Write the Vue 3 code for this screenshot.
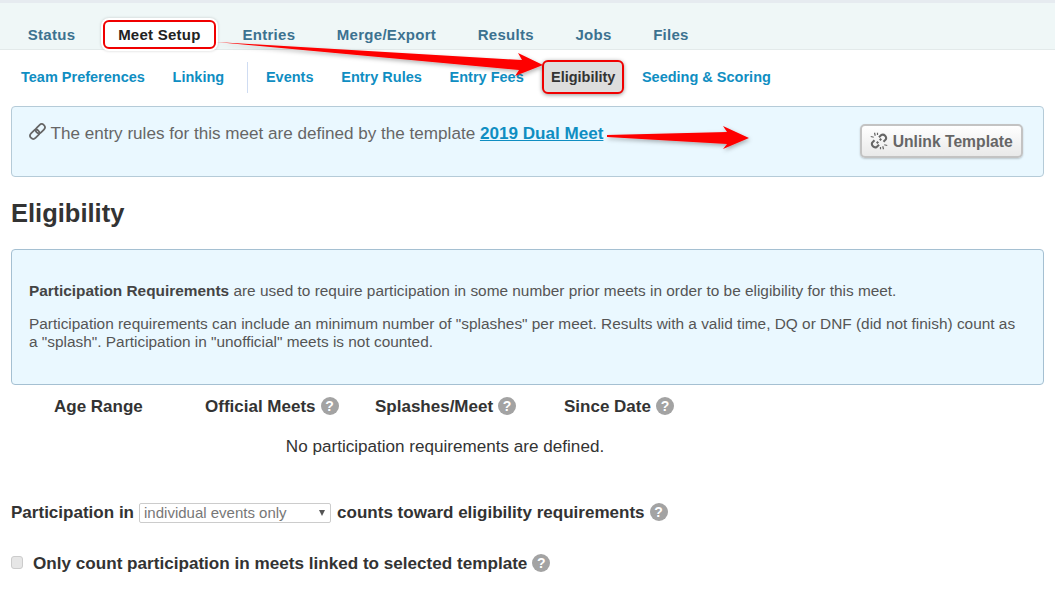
<script setup>
const tabs = [
  { label: 'Status' },
  { label: 'Meet Setup', active: true },
  { label: 'Entries' },
  { label: 'Merge/Export' },
  { label: 'Results' },
  { label: 'Jobs' },
  { label: 'Files' },
]
const subLeft = ['Team Preferences', 'Linking']
const subRight = ['Events', 'Entry Rules', 'Entry Fees', 'Eligibility', 'Seeding & Scoring']
const columns = [
  { label: 'Age Range', help: false, cls: 'c1' },
  { label: 'Official Meets', help: true, cls: 'c2' },
  { label: 'Splashes/Meet', help: true, cls: 'c3' },
  { label: 'Since Date', help: true, cls: 'c4' },
]
</script>

<template>
  <div class="page">
    <nav class="tabs">
      <a v-for="t in tabs" :key="t.label" class="tab" :class="{ active: t.active }">{{ t.label }}</a>
    </nav>

    <nav class="subnav">
      <a v-for="s in subLeft" :key="s" class="sub">{{ s }}</a>
      <span class="divider"></span>
      <a v-for="s in subRight" :key="s" class="sub" :class="{ current: s === 'Eligibility' }">{{ s }}</a>
    </nav>

    <section class="banner">
      <p class="banner-text">
        <svg class="link-icon" viewBox="0 0 24 24" fill="none" stroke="#666" stroke-width="2.2">
          <g transform="rotate(-45 12 12)">
            <rect x="0.500" y="8" width="13" height="8" rx="4" />
            <rect x="10.500" y="8" width="13" height="8" rx="4" />
          </g>
        </svg>
        The entry rules for this meet are defined by the template
        <a class="tpl">2019 Dual Meet</a>
      </p>
      <button class="unlink" type="button">
        <svg class="link-icon small" viewBox="0 0 24 24" fill="none" stroke="#666" stroke-width="2.8">
          <path d="M12 7l3-3a4.500 4.500 0 0 1 6 6l-3 3" />
          <path d="M12 17l-3 3a4.500 4.500 0 0 1-6-6l3-3" />
          <path d="M9 15l2-2M13 11l2-2" />
          <path d="M6 1l1 4M10 1v3M1 6l4 1M18 23l-1-4M14 23v-3M23 18l-4-1" stroke-width="1.600" />
        </svg>
        Unlink Template
      </button>
    </section>

    <h1 class="title">Eligibility</h1>

    <section class="info">
      <p><b>Participation Requirements</b> are used to require participation in some number prior meets in order to be eligibility for this meet.</p>
      <p>Participation requirements can include an minimum number of "splashes" per meet. Results with a valid time, DQ or DNF (did not finish) count as a "splash". Participation in "unofficial" meets is not counted.</p>
    </section>

    <div class="cols">
      <div v-for="c in columns" :key="c.label" class="col" :class="c.cls">
        {{ c.label }}<span v-if="c.help" class="help">?</span>
      </div>
    </div>
    <p class="empty">No participation requirements are defined.</p>

    <div class="row part">
      <b>Participation in</b>
      <span class="select">individual events only<i class="caret"></i></span>
      <b>counts toward eligibility requirements</b>
      <span class="help">?</span>
    </div>

    <div class="row only">
      <span class="check"></span>
      <b class="only-label">Only count participation in meets linked to selected template</b>
      <span class="help">?</span>
    </div>

    <svg class="overlay" width="1055" height="598" viewBox="0 0 1055 598">
      <defs>
        <filter id="sh" x="-10%" y="-40%" width="120%" height="200%">
          <feDropShadow dx="1" dy="2" stdDeviation="2" flood-color="#000" flood-opacity="0.3" />
        </filter>
      </defs>
      <polygon filter="url(#sh)" fill="#fe0000" points="216,42 522,60 518,53 543,65 515,76 519,70" />
      <polygon filter="url(#sh)" fill="#fe0000" points="607,135 607,137 727,144 723,149 749,138 723,126 727,132" />
    </svg>
  </div>
</template>

<style>
html, body { margin: 0; background: #fff; }
</style>

<style scoped>
.page {
  position: relative;
  width: 1055px;
  height: 598px;
  overflow: hidden;
  background: #fff;
  font-family: "Liberation Sans", Arial, sans-serif;
  color: #333;
  border-top: 3px solid #e6ebf0;
  box-sizing: border-box;
}
.tabs {
  display: flex;
  align-items: flex-end;
  height: 47px;
  background: #eff7f7;
  border-bottom: 1px solid #e3eaea;
  box-sizing: border-box;
  padding-left: 10px;
}
.tab {
  padding: 0 17.800px;
  height: 31px;
  line-height: 33px;
  font-size: 15px;
  font-weight: 700;
  color: #3c7290;
  letter-spacing: 0.28px;
  margin-right: 6px;
}
.tab.active {
  box-sizing: border-box;
  color: #222;
  background: #fff;
  border: 2px solid #f00000;
  border-radius: 6px;
  height: 29px;
  line-height: 26px;
  padding: 0 13px;
  margin: 0 9px 0 4px;
  letter-spacing: 0.25px;
  box-shadow: 0 0 0 2px #fff, 0 0 3px 2px rgba(0, 0, 0, 0.18);
}
.subnav {
  display: flex;
  align-items: center;
  height: 54px;
  margin-bottom: 2px;
  padding-left: 11px;
}
.sub {
  padding: 0 10px;
  margin-right: 7.750px;
  font-size: 14.500px;
  font-weight: 700;
  color: #0f8ec2;
  line-height: 30px;
}
.sub.current {
  color: #333;
  background: #ddd;
  border: 2px solid #f00000;
  border-radius: 6px;
  padding: 0 6.500px;
  margin: 0 8px 0 1px;
  box-shadow: 0 1px 4px rgba(0, 0, 0, 0.4);
}
.divider {
  width: 1px;
  height: 31px;
  background: #cfdcf2;
  margin: 0 8px 0 5px;
}
.banner {
  display: flex;
  justify-content: space-between;
  margin: 0 11px;
  height: 71px;
  box-sizing: border-box;
  border: 1px solid #b5cbd8;
  border-radius: 4px;
  background: #eaf8ff;
  padding: 15px 20px 0 17px;
}
.banner-text {
  margin: 0;
  font-size: 17.100px;
  line-height: 24px;
  color: #666;
}
.link-icon {
  width: 19px;
  height: 19px;
  margin-left: -1px;
  margin-right: -1px;
  vertical-align: -2px;
}
.link-icon.small {
  width: 18px;
  height: 18px;
  margin-left: 0;
  margin-right: 0;
  vertical-align: -3px;
}
.tpl {
  font-weight: 700;
  color: #0f8ec2;
  text-decoration: underline;
}
.unlink {
  align-self: flex-start;
  margin-top: 2px;
  width: 163px;
  height: 34px;
  padding: 0;
  font: 700 15.700px "Liberation Sans", Arial, sans-serif;
  color: #666;
  background: linear-gradient(#fff, #e9e9e9);
  border: 2px solid #c3c3c3;
  border-radius: 5px;
  box-shadow: 0 1px 2px rgba(0, 0, 0, 0.2);
}
.title {
  margin: 20px 0 0 11px;
  font-size: 25.500px;
  line-height: 32px;
  font-weight: 700;
  color: #333;
}
.info {
  margin: 20px 11px 0;
  height: 136px;
  box-sizing: border-box;
  border: 1px solid #a5c0d2;
  border-radius: 4px;
  background: #eaf8ff;
  padding: 32px 17px 0;
  font-size: 15.400px;
  line-height: 18px;
  color: #555;
}
.info p { margin: 0 0 15px; }
.info b { color: #444; }
.cols {
  display: flex;
  margin-top: 12px;
  height: 20px;
  font-size: 17px;
  line-height: 20px;
  font-weight: 700;
  color: #333;
}
.col { white-space: nowrap; }
.c1 { margin-left: 54px; width: 151px; }
.c2 { width: 170px; }
.c3 { width: 189px; }
.help {
  display: inline-block;
  flex: none;
  width: 18px;
  height: 18px;
  margin-left: 5px;
  border-radius: 50%;
  background: #a3a3a3;
  color: #fff;
  font-size: 14px;
  font-weight: 700;
  line-height: 18px;
  text-align: center;
  vertical-align: 1px;
}
.empty {
  margin: 20px 0 0;
  width: 890px;
  text-align: center;
  font-size: 17.100px;
  line-height: 20px;
  color: #333;
}
.row {
  display: flex;
  align-items: center;
  margin-left: 11px;
  font-size: 17.050px;
  line-height: 20px;
  color: #333;
}
.only-label { font-size: 17.120px; }
.part { margin-top: 46px; }
.part .help { position: relative; top: -1px; }
.select {
  position: relative;
  width: 192px;
  height: 20px;
  box-sizing: border-box;
  margin: 0 6px 0 5px;
  padding-left: 4px;
  border: 1px solid #ccc;
  border-radius: 2px;
  font-size: 15px;
  line-height: 18px;
  color: #777;
}
.caret {
  position: absolute;
  top: 6px;
  right: 5px;
  border-left: 3.500px solid transparent;
  border-right: 3.500px solid transparent;
  border-top: 6px solid #555;
}
.only { margin-top: 31px; }
.only .help { position: relative; top: -1px; }
.check {
  width: 12px;
  height: 13px;
  margin-right: 10px;
  position: relative;
  top: -2px;
  border: 1px solid #ccc;
  border-radius: 3px;
  background: #e6e6e6;
  box-sizing: border-box;
}
.overlay {
  position: absolute;
  left: 0;
  top: -3px;
  pointer-events: none;
}
</style>
